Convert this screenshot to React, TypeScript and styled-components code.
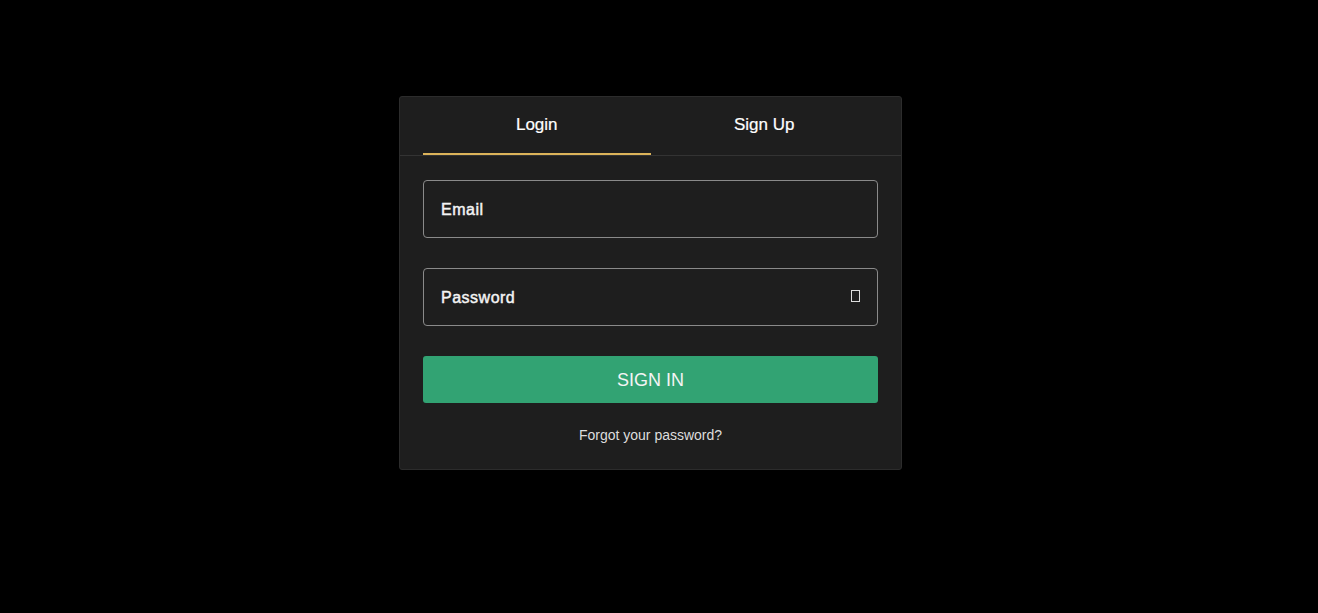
import React from "react";
import styled, { createGlobalStyle } from "styled-components";

const Global = createGlobalStyle`
  html, body { margin: 0; padding: 0; background: #000; }
  body { font-family: "Liberation Sans", Arial, sans-serif; }
  * { box-sizing: border-box; }
`;

const Page = styled.div`
  min-height: 613px;
  display: flex;
  justify-content: center;
  align-items: flex-start;
  padding: 96px 17px 0 0;
`;

const Card = styled.div`
  width: 503px;
  background: #1e1e1e;
  border: 1px solid #2c2c2c;
  border-radius: 3px;
  padding-bottom: 25px;
`;

const Tabs = styled.div`
  display: flex;
  padding: 0 23px;
  border-bottom: 1px solid #333;
`;

const Tab = styled.button<{ $active?: boolean }>`
  flex: 1;
  height: 58px;
  background: none;
  border: none;
  border-bottom: 2px solid ${(p) => (p.$active ? "#dcb35a" : "transparent")};
  color: #fff;
  font-family: "Liberation Sans", Arial, sans-serif;
  font-size: 17px;
  font-weight: 400;
  -webkit-text-stroke: 0.2px #fff;
  padding: 0;
  cursor: pointer;
`;

const Form = styled.div`
  display: flex;
  flex-direction: column;
  padding: 24px 23px 0;
`;

const Field = styled.div`
  height: 58px;
  border: 1px solid #8a8a8a;
  border-radius: 4px;
  display: flex;
  align-items: center;
  padding: 2px 16px 0 17px;
  margin-bottom: 30px;
`;

const Label = styled.span`
  flex: 1;
  color: #f4f4f4;
  font-size: 16px;
  font-weight: 400;
  letter-spacing: 0.5px;
  -webkit-text-stroke: 0.45px #f4f4f4;
`;

const Tofu = styled.span`
  width: 9px;
  height: 12px;
  border: 1px solid #ddd;
  margin-right: 1px;
  margin-top: -4px;
`;

const Button = styled.button`
  height: 47px;
  border: none;
  border-radius: 3px;
  background: #32a373;
  color: #f4f4f4;
  font-family: "Liberation Sans", Arial, sans-serif;
  font-size: 18px;
  font-weight: 400;
  padding: 2px 0 0;
  cursor: pointer;
`;

const Forgot = styled.a`
  display: block;
  text-align: center;
  color: #ddd;
  font-size: 14px;
  margin-top: 23px;
  line-height: 18px;
  cursor: pointer;
`;

export default function App() {
  return (
    <>
      <Global />
      <Page>
        <Card>
          <Tabs>
            <Tab $active>Login</Tab>
            <Tab>Sign Up</Tab>
          </Tabs>
          <Form>
            <Field>
              <Label>Email</Label>
            </Field>
            <Field>
              <Label>Password</Label>
              <Tofu />
            </Field>
            <Button>SIGN IN</Button>
            <Forgot>Forgot your password?</Forgot>
          </Form>
        </Card>
      </Page>
    </>
  );
}
